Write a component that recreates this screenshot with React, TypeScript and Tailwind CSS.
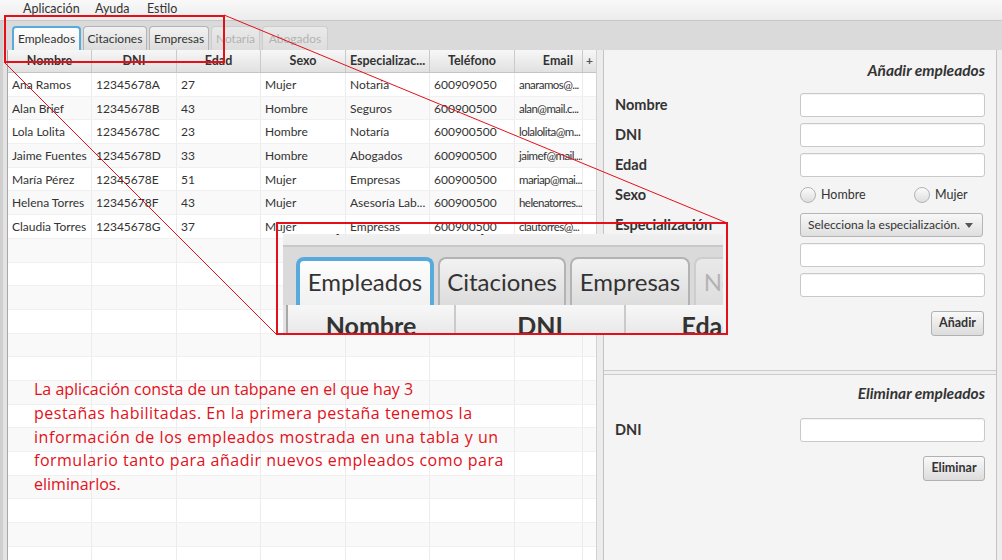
import React from "react";

const ROWS: string[][] = [
  ["Ana Ramos", "12345678A", "27", "Mujer", "Notaria", "600909050", "anaramos@..."],
  ["Alan Brief", "12345678B", "43", "Hombre", "Seguros", "600900500", "alan@mail.c..."],
  ["Lola Lolita", "12345678C", "23", "Hombre", "Notaría", "600900500", "lolalolita@m..."],
  ["Jaime Fuentes", "12345678D", "33", "Hombre", "Abogados", "600900500", "jaimef@mail...."],
  ["María Pérez", "12345678E", "51", "Mujer", "Empresas", "600900500", "mariap@mai..."],
  ["Helena Torres", "12345678F", "43", "Mujer", "Asesoría Lab...", "600900500", "helenatorres..."],
  ["Claudia Torres", "12345678G", "37", "Mujer", "Empresas", "600900500", "clautorres@..."],
];

const COLW = ["w-[84px]", "w-[85px]", "w-[84px]", "w-[85px]", "w-[84px]", "w-[85px]", "w-[68px]"];
const HEAD = ["Nombre", "DNI", "Edad", "Sexo", "Especializac...", "Teléfono", "Email"];

function Tab({ label, w, state }: { label: string; w: string; state: "active" | "normal" | "disabled" }) {
  const base = `${w} h-[24px] shrink-0 flex items-center justify-center rounded-t-[4px] text-[12px] leading-none whitespace-nowrap`;
  if (state === "active")
    return (
      <div className={`${base} border-2 border-b-0 border-[#58aadc] bg-gradient-to-b from-[#fdfdfd] to-[#f1f1f1] text-[#333]`}>
        {label}
      </div>
    );
  if (state === "disabled")
    return (
      <div className={`${base} border border-b-0 border-[#cdcdcd] bg-gradient-to-b from-[#e9e9e9] to-[#dedede] text-[#b3b3b3]`}>
        {label}
      </div>
    );
  return (
    <div className={`${base} border border-b-0 border-[#b3b3b3] bg-gradient-to-b from-[#f2f2f2] to-[#dcdcdc] text-[#333]`}>
      {label}
    </div>
  );
}

function Input() {
  return <div className="w-[185px] h-[24px] bg-white border border-[#c9c9c9] rounded-[3px] shadow-[inset_0_1px_1px_rgba(0,0,0,0.05)]" />;
}

function Radio({ label }: { label: string }) {
  return (
    <div className="flex items-center">
      <div className="w-[16px] h-[16px] rounded-full border border-[#b3b3b3] bg-gradient-to-b from-[#fbfbfb] to-[#dedede]" />
      <span className="ml-[5px] text-[12.5px] text-[#333]">{label}</span>
    </div>
  );
}

function Button({ label, w }: { label: string; w: string }) {
  return (
    <div className={`${w} h-[25px] flex items-center justify-center rounded-[3px] border border-[#b1b1b1] bg-gradient-to-b from-[#f9f9f9] to-[#dcdcdc] text-[12.5px] font-bold text-[#333]`}>
      {label}
    </div>
  );
}

function FormRow({ label, children }: { label: string; children: React.ReactNode }) {
  return (
    <div className="h-[24px] flex items-center">
      <div className="flex-1 text-[14.5px] font-bold text-[#333] whitespace-nowrap">{label}</div>
      <div className="w-[185px]">{children}</div>
    </div>
  );
}

function Screen() {
  const totalRows = 21;
  return (
    <div className="w-[1002px] h-[560px] flex flex-col bg-[#f4f4f4] text-[#333] font-['Lato',sans-serif] overflow-hidden">
      {/* menu bar */}
      <div className="h-[21px] shrink-0 flex items-start pl-[23px] pt-[1px] border-b border-[#c8c8c8] bg-gradient-to-b from-[#f9f9f9] to-[#ececec] text-[12.5px] leading-[16px] text-[#333]">
        <span className="w-[72px]">Aplicación</span>
        <span className="w-[52px]">Ayuda</span>
        <span>Estilo</span>
      </div>
      {/* tab header */}
      <div className="h-[29px] shrink-0 flex items-end gap-[2px] pl-[9px] bg-[#dadada] border-l-[3px] border-[#cfcfcf]">
        <Tab label="Empleados" w="w-[69px]" state="active" />
        <Tab label="Citaciones" w="w-[64px]" state="normal" />
        <Tab label="Empresas" w="w-[60px]" state="normal" />
        <Tab label="Notaría" w="w-[49px]" state="disabled" />
        <Tab label="Abogados" w="w-[66px]" state="disabled" />
      </div>
      {/* content */}
      <div className="flex-1 flex min-h-0">
        <div className="w-[7px] shrink-0 bg-[#e3e3e3] border-l-[3px] border-[#cfcfcf]" />
        {/* table */}
        <div className="w-[589px] shrink-0 flex flex-col border-l border-[#a8a8a8] bg-white">
          <div className="h-[23px] shrink-0 flex border-b border-[#c4c4c4] bg-gradient-to-b from-[#f7f7f7] to-[#e1e1e1] text-[12.5px] font-bold">
            {HEAD.map((h, i) => (
              <div
                key={h}
                className={`${COLW[i]} shrink-0 h-full flex items-center border-r border-[#cacaca] whitespace-nowrap ${i === 6 ? "justify-end pr-[9px]" : "justify-center"}`}
              >
                {h}
              </div>
            ))}
            <div className="w-[13px] shrink-0 h-full flex items-center justify-center text-[12px] text-[#555]">+</div>
          </div>
          {Array.from({ length: totalRows }).map((_, r) => {
            const row = ROWS[r];
            return (
              <div key={r} className={`h-[23.7px] shrink-0 flex border-b border-[#f0f0f0] ${r % 2 === 0 ? "bg-white" : "bg-[#f9f9f9]"}`}>
                {COLW.map((w, c) => (
                  <div
                    key={c}
                    className={`${w} shrink-0 h-full border-r border-[#ececec] pl-[4px] leading-[23px] whitespace-nowrap overflow-hidden ${c === 6 ? "text-[11.5px] tracking-[-0.55px]" : "text-[12px]"}`}
                  >
                    {row ? row[c] : ""}
                  </div>
                ))}
              </div>
            );
          })}
        </div>
        {/* split divider */}
        <div className="w-[8px] shrink-0 bg-[#ececec] border-l border-[#d2d2d2] border-r border-r-[#c3c3c3]" />
        {/* right pane */}
        <div className="w-[392px] shrink-0 flex flex-col">
          <div className="h-[320px] shrink-0 flex flex-col pl-[11px] pr-[11px] pt-[10px]">
            <div className="h-[20px] text-right text-[15.5px] leading-[20px] font-bold italic">Añadir empleados</div>
            <div className="mt-[13px] flex flex-col gap-[6px]">
              <FormRow label="Nombre"><Input /></FormRow>
              <FormRow label="DNI"><Input /></FormRow>
              <FormRow label="Edad"><Input /></FormRow>
              <FormRow label="Sexo">
                <div className="flex items-center">
                  <div className="w-[114px]"><Radio label="Hombre" /></div>
                  <Radio label="Mujer" />
                </div>
              </FormRow>
              <FormRow label="Especialización">
                <div className="w-[183px] h-[24px] flex items-center justify-between pl-[7px] pr-[9px] rounded-[3px] border border-[#b5b5b5] bg-gradient-to-b from-[#f8f8f8] to-[#dfdfdf] text-[12px] whitespace-nowrap">
                  <span>Selecciona la especialización.</span>
                  <svg width="8" height="5" viewBox="0 0 8 5"><path d="M0 0 L8 0 L4 5 Z" fill="#555" /></svg>
                </div>
              </FormRow>
              <FormRow label=""><Input /></FormRow>
              <FormRow label=""><Input /></FormRow>
            </div>
            <div className="mt-[14px] flex justify-end pr-[1px]">
              <Button label="Añadir" w="w-[53px]" />
            </div>
          </div>
          <div className="h-[5px] shrink-0 bg-[#efefef] border-y border-[#cdcdcd]" />
          <div className="flex-1 flex flex-col pl-[11px] pr-[11px] pt-[8px]">
            <div className="h-[20px] text-right text-[15.5px] leading-[20px] font-bold italic">Eliminar empleados</div>
            <div className="mt-[15px]">
              <FormRow label="DNI"><Input /></FormRow>
            </div>
            <div className="mt-[14px] flex justify-end">
              <Button label="Eliminar" w="w-[62px]" />
            </div>
          </div>
        </div>
        <div className="w-[6px] shrink-0 bg-[#ededed] border-l border-[#c4c4c4]" />
      </div>
    </div>
  );
}

export default function App() {
  return (
    <div className="relative w-[1002px] h-[560px] overflow-hidden">
      <Screen />
      {/* annotation: highlight box */}
      <div className="absolute left-[4px] top-[15px] w-[221px] h-[48px] border-2 border-[#e3101a] pointer-events-none" />
      {/* annotation: magnified inset */}
      <div className="absolute left-[283px] top-[234px] w-[440px] h-[99px] overflow-hidden pointer-events-none">
        <div className="origin-top-left scale-200 -translate-x-[11px] -translate-y-[29px]">
          <Screen />
        </div>
      </div>
      <div className="absolute left-[276px] top-[222px] w-[452px] h-[113px] border-2 border-[#e3101a] pointer-events-none" />
      <svg className="absolute left-0 top-0 pointer-events-none" width="1002" height="560" viewBox="0 0 1002 560">
        <line x1="224" y1="15" x2="727" y2="223" stroke="#e3101a" strokeWidth="1" />
        <line x1="4" y1="62" x2="276" y2="334" stroke="#e3101a" strokeWidth="1" />
      </svg>
      {/* annotation: caption */}
      <div className="absolute left-[34px] top-[378px] text-[16px] leading-[23.8px] text-[#e3101a] font-['Open_Sans',sans-serif] whitespace-nowrap">
        <div>La aplicación consta de un tabpane en el que hay 3</div>
        <div className="tracking-[0.5px]">pestañas habilitadas. En la primera pestaña tenemos la</div>
        <div className="tracking-[0.55px]">información de los empleados mostrada en una tabla y un</div>
        <div className="tracking-[0.5px]">formulario tanto para añadir nuevos empleados como para</div>
        <div>eliminarlos.</div>
      </div>
    </div>
  );
}
